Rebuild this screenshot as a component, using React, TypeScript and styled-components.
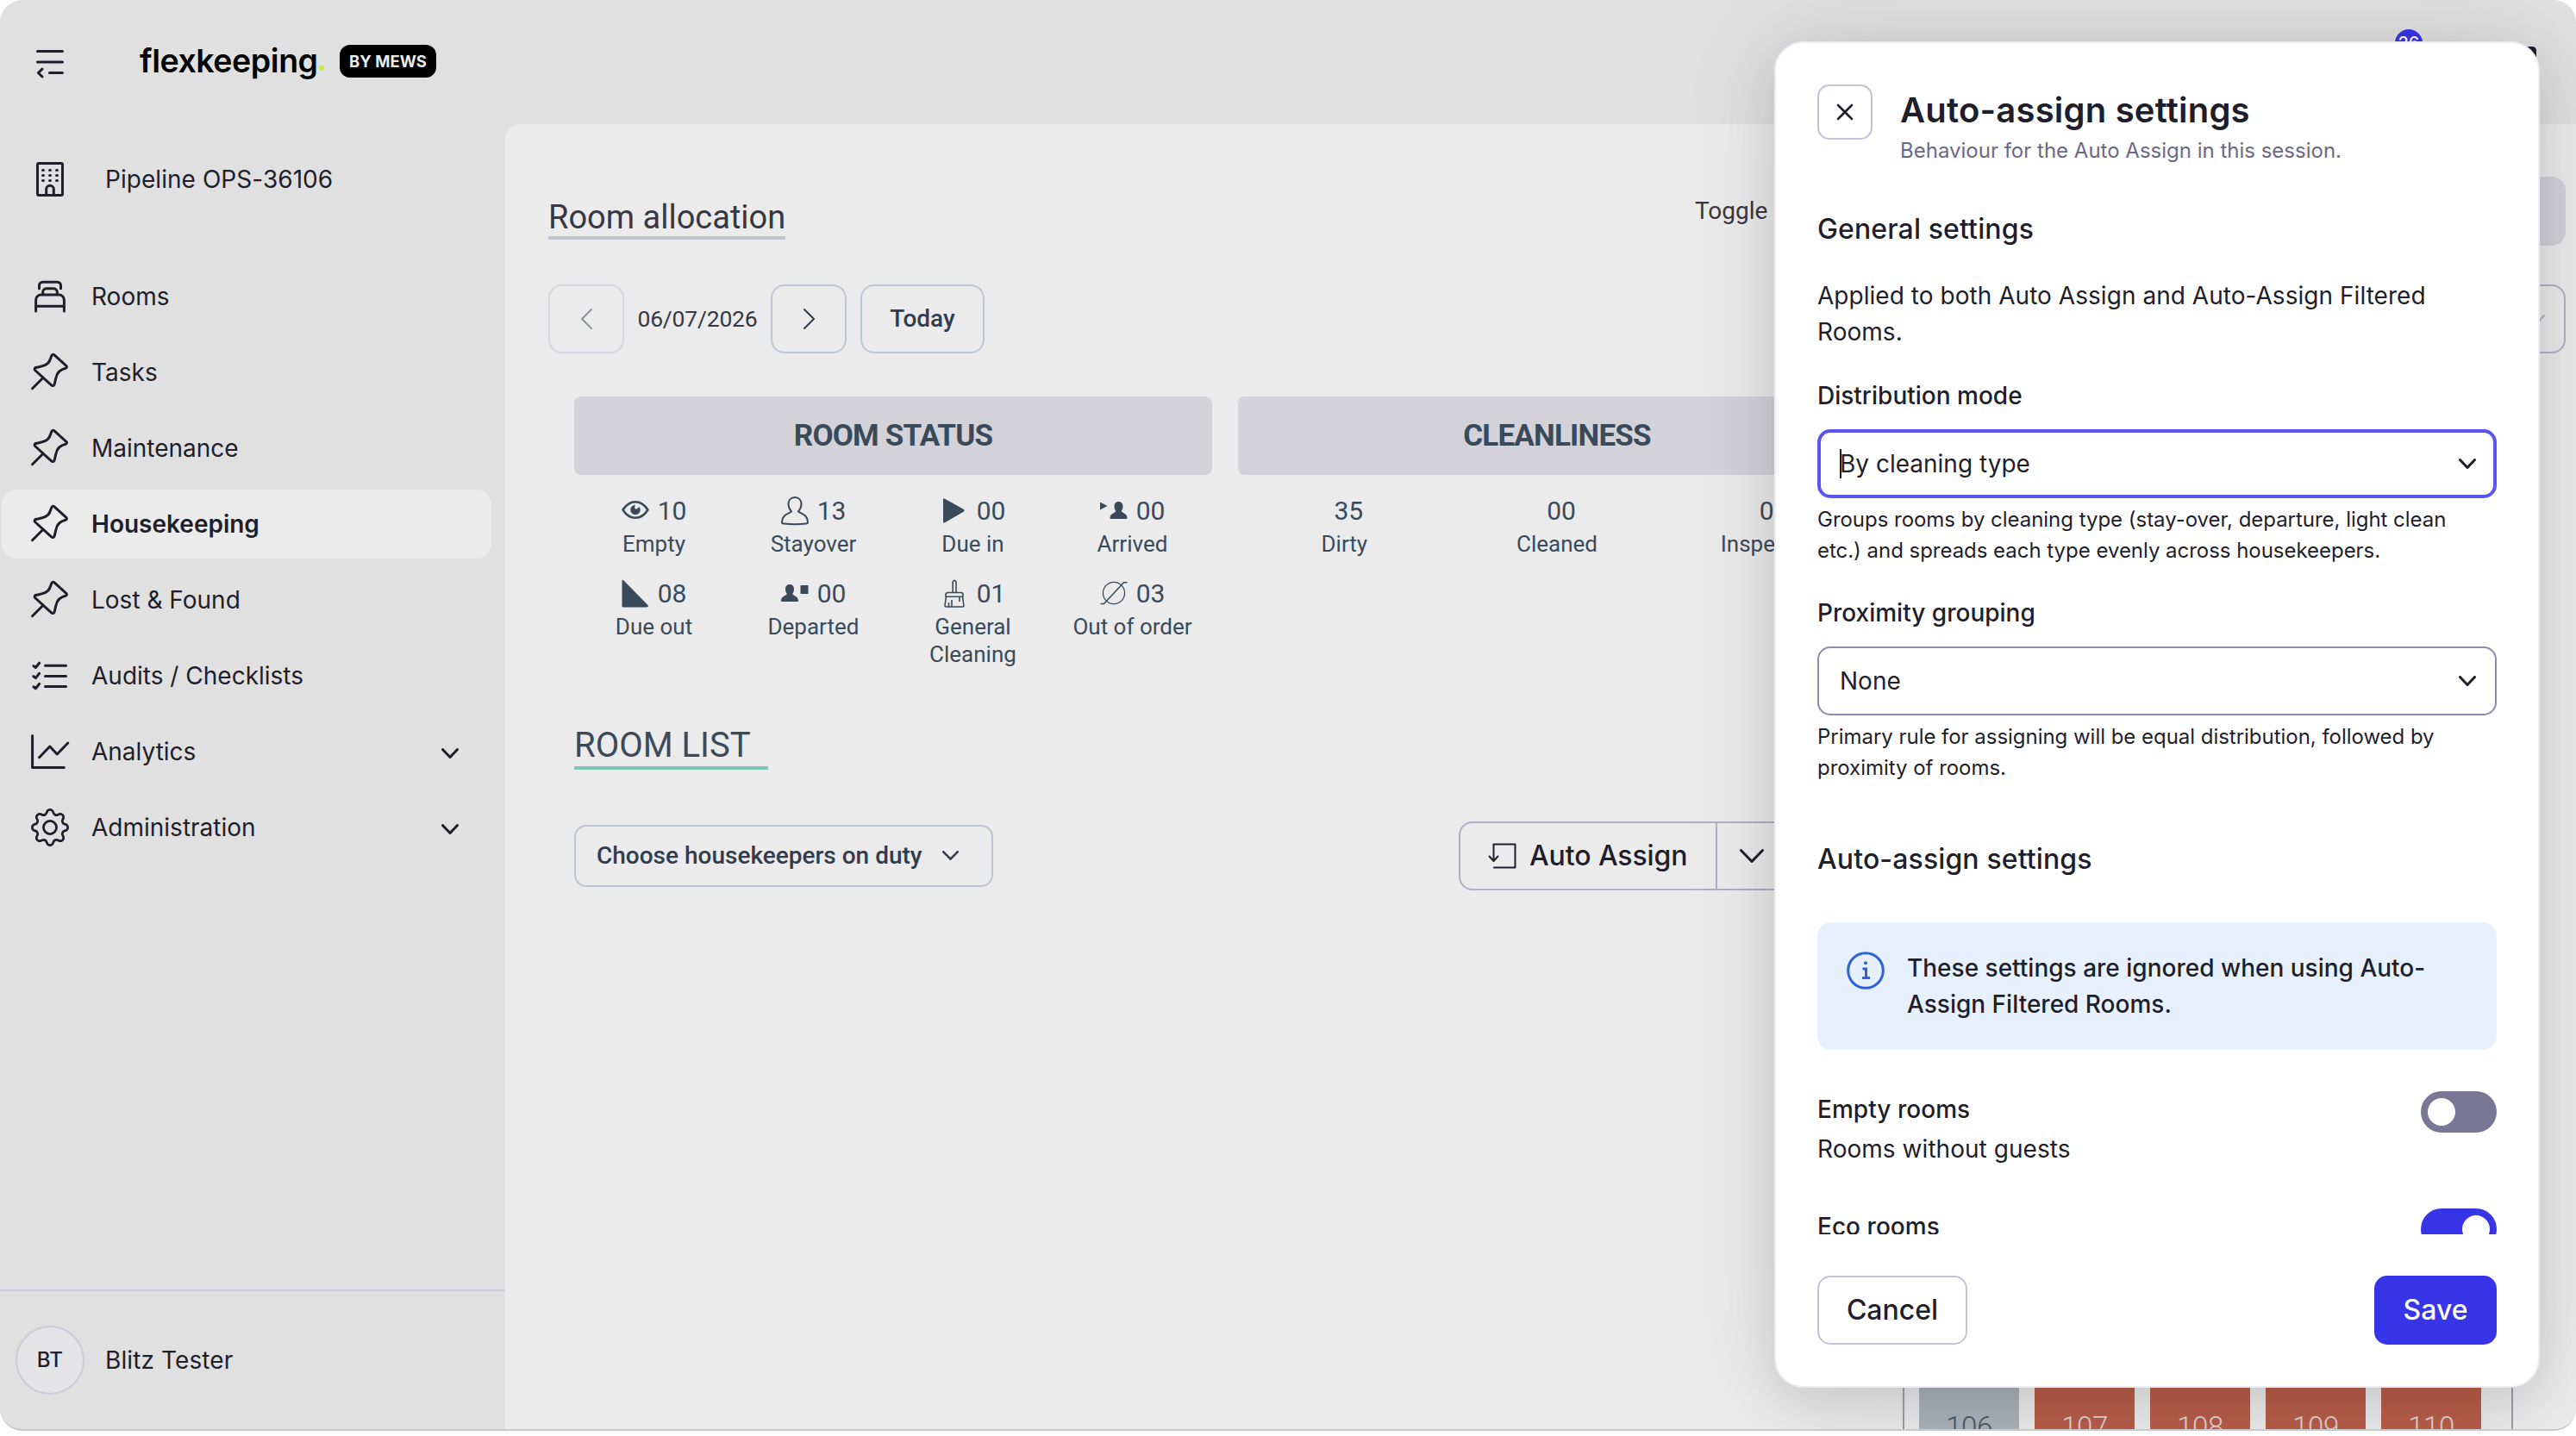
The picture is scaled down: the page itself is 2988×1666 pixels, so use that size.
import React from 'react'
import styled, { createGlobalStyle, css } from 'styled-components'
import { BsGear } from 'react-icons/bs'

const color = {
  sidebar: '#e0e0e0',
  surface: '#ebebeb',
  ink: '#1f1e2b',
  slate: '#3a4a5a',
  navy: '#333b4f',
  charcoal: '#383742',
  outline: '#bfc4d1',
  lavender: '#b1afc4',
  divider: '#cdcbd8',
  header: '#d3d2d8',
  primary: '#3834e8',
}

const inter = `Inter, 'Open Sans', sans-serif`
const roboto = `Roboto, 'Noto Sans', sans-serif`

const GlobalStyle = createGlobalStyle`
  * {
    box-sizing: border-box;
  }

  html,
  body {
    margin: 0;
    padding: 0;
    background: #fff;
  }

  body {
    width: 2988px;
    height: 1666px;
    overflow: hidden;
    font-family: ${inter};
    color: ${color.ink};
  }

  button {
    font: inherit;
    color: inherit;
    background: none;
    border: none;
    padding: 0;
  }

  h1, h2, h3, p {
    margin: 0;
    font-weight: 400;
  }

  svg {
    display: block;
    flex: none;
  }
`

const Window = styled.div`
  position: relative;
  width: 2988px;
  height: 1660px;
  display: flex;
  flex-direction: column;
  background: ${color.sidebar};
  border-bottom: 2px solid #c9c9c9;
  border-radius: 26px;
  overflow: hidden;
`

/* top bar */

const TopBar = styled.header`
  flex: none;
  height: 144px;
  display: flex;
  align-items: flex-start;
  padding: 34px 46px 0 36px;
`

const MenuButton = styled.button`
  margin-top: 18px;
`

const Brand = styled.div`
  display: flex;
  align-items: center;
  margin: 18px 0 0 82px;
  height: 38px;
  color: #000;
`

const BrandName = styled.span`
  width: 208px;
  font-size: 37.5px;
  font-weight: 600;
  line-height: 38px;
  letter-spacing: -0.45px;
  white-space: nowrap;
`

const BrandDot = styled.span`
  width: 6px;
  height: 6px;
  margin: 16px 18px 0 0;
  border-radius: 50%;
  background: #cfe83c;
`

const BrandTag = styled.span`
  width: 112px;
  height: 38px;
  border-radius: 12px;
  background: #000;
  color: ${color.surface};
  font-size: 18.5px;
  font-weight: 700;
  line-height: 38px;
  text-align: center;
  white-space: nowrap;
`

const TopActions = styled.div`
  display: flex;
  align-items: flex-start;
  gap: 92px;
  margin-left: auto;
`

const CountBadge = styled.span`
  width: 32px;
  height: 32px;
  border-radius: 50%;
  background: ${color.primary};
  color: #fff;
  font-size: 20px;
  font-weight: 500;
  line-height: 33px;
  text-align: center;
`

const ProfileButton = styled.button`
  margin-top: 20px;
`

/* sidebar */

const Body = styled.div`
  flex: 1;
  min-height: 0;
  display: flex;
`

const Sidebar = styled.aside`
  flex: none;
  width: 586px;
  display: flex;
  flex-direction: column;
`

const Property = styled.div`
  height: 80px;
  margin: 24px 0 56px;
  padding-left: 36px;
  display: flex;
  align-items: center;
  gap: 42px;
  font-size: 28px;
  letter-spacing: 0.05px;
`

const Nav = styled.nav`
  display: flex;
  flex-direction: column;
  gap: 8px;
  padding: 0 16px 0 2px;
`

const NavItem = styled.a<{ $active?: boolean }>`
  height: 80px;
  display: flex;
  align-items: center;
  gap: 26px;
  padding: 0 38px 0 34px;
  border-radius: 18px;
  font-size: 28px;
  white-space: nowrap;

  ${({ $active }) =>
    $active &&
    css`
      background: ${color.surface};
      font-weight: 600;
    `}

  & > svg:last-child:not(:first-child) {
    margin: 3px 0 0 auto;
  }
`

const UserRow = styled.div`
  height: 162px;
  margin-top: auto;
  padding-left: 18px;
  display: flex;
  align-items: center;
  gap: 24px;
  border-top: 2px solid ${color.divider};
  font-size: 28px;
  letter-spacing: 0.1px;
`

const Avatar = styled.span`
  width: 80px;
  height: 80px;
  border: 2px solid ${color.divider};
  border-radius: 50%;
  background: #e4e4e7;
  font-size: 24px;
  font-weight: 500;
  line-height: 76px;
  text-align: center;
`

/* main */

const Main = styled.main`
  flex: 1;
  min-width: 0;
  padding: 61px 12px 0 50px;
  background: ${color.surface};
  border-top-left-radius: 18px;
  font-family: ${roboto};
  color: ${color.charcoal};
`

const TitleRow = styled.div`
  height: 80px;
  display: flex;
  align-items: flex-start;
`

const PageTitle = styled.h1`
  width: 275px;
  margin-top: 25px;
  border-bottom: 4px solid ${color.outline};
  font-size: 38px;
  line-height: 44px;
  white-space: nowrap;
`

const ToggleLabel = styled.span`
  width: 110px;
  margin-left: 1055px;
  font-size: 28px;
  line-height: 80px;
`

const ToggleField = styled.div`
  flex: 1;
  height: 80px;
  border-radius: 16px;
  background: ${color.header};
`

const DateRow = styled.div`
  height: 80px;
  margin-top: 45px;
  display: flex;
  align-items: center;
`

const OutlineButton = styled.button<{ $faded?: boolean }>`
  width: 88px;
  height: 80px;
  display: flex;
  align-items: center;
  justify-content: center;
  border: 2px solid ${color.outline};
  border-radius: 16px;
  color: ${color.navy};
  opacity: ${({ $faded }) => ($faded ? 0.5 : 1)};
`

const TodayButton = styled(OutlineButton)`
  width: 144px;
  margin-left: 16px;
  padding-bottom: 1px;
  font-size: 28px;
  font-weight: 500;
`

const DateText = styled.span`
  width: 170px;
  padding-bottom: 2px;
  font-size: 26.5px;
  letter-spacing: -0.2px;
  text-align: center;
`

const FilterSelect = styled.div`
  width: 500px;
  height: 80px;
  margin-left: auto;
  padding-right: 22px;
  display: flex;
  align-items: center;
  justify-content: flex-end;
  border: 2px solid ${color.lavender};
  border-radius: 16px;
  color: #b9b9bd;
`

const StatGroups = styled.section`
  display: flex;
  gap: 30px;
  margin: 50px 0 0 30px;
  color: ${color.slate};
`

const StatGroup = styled.div`
  width: 740px;
`

const StatHeader = styled.h2`
  height: 91px;
  border-radius: 8px;
  background: ${color.header};
  font-size: 35px;
  font-weight: 700;
  line-height: 91px;
  letter-spacing: -0.8px;
  text-align: center;
`

const StatGrid = styled.div<{ $columns: number }>`
  display: grid;
  grid-template-columns: repeat(${({ $columns }) => $columns}, 1fr);
  row-gap: 22px;
  padding-top: 22px;
`

const Stat = styled.div`
  display: flex;
  flex-direction: column;
  align-items: center;
`

const StatValue = styled.div`
  height: 40px;
  margin-bottom: 2px;
  display: flex;
  align-items: center;
  gap: 10px;
  font-size: 30px;
  line-height: 40px;
`

const BareValue = styled(StatValue)`
  padding-left: 10px;
`

const StatLabel = styled.div`
  max-width: 150px;
  font-size: 26px;
  line-height: 32px;
  text-align: center;
`

const ListTitle = styled.h2`
  width: 225px;
  margin: 64px 0 60px 30px;
  padding-top: 2px;
  border-bottom: 4px solid #82c4ba;
  color: ${color.slate};
  font-size: 40px;
  line-height: 48px;
`

const ActionRow = styled.div`
  height: 80px;
  margin-left: 30px;
  display: flex;
  align-items: center;
`

const DutyButton = styled.button`
  width: 486px;
  height: 72px;
  display: flex;
  align-items: center;
  gap: 23px;
  padding: 0 0 1px 24px;
  border: 2px solid ${color.outline};
  border-radius: 14px;
  color: ${color.navy};
  font-size: 28px;
  font-weight: 500;
  white-space: nowrap;
`

const SplitButton = styled.div`
  height: 80px;
  margin-left: 540px;
  display: flex;
  border: 2px solid ${color.lavender};
  border-radius: 16px;
  color: ${color.ink};
  font-family: ${inter};
`

const SplitMain = styled.button`
  width: 298px;
  display: flex;
  align-items: center;
  gap: 15px;
  padding: 0 0 1px 32px;
  border-right: 2px solid ${color.lavender};
  font-size: 32px;
  font-weight: 500;
  letter-spacing: -0.1px;
  white-space: nowrap;
`

const SplitCaret = styled.button`
  width: 80px;
  display: flex;
  align-items: center;
  justify-content: center;
`

const FloorPlan = styled.div`
  width: 708px;
  height: 200px;
  margin: 507px 0 0 1571px;
  display: flex;
  gap: 18px;
  padding-left: 17px;
  border: solid #9aa0a8;
  border-width: 0 2px;
`

const RoomTile = styled.div<{ $dirty?: boolean }>`
  flex: none;
  width: 116px;
  padding-top: 91px;
  background: ${({ $dirty }) => ($dirty ? '#b85d49' : '#a9b2b9')};
  color: ${({ $dirty }) => ($dirty ? '#dfd3d0' : '#4a5966')};
  font-size: 33px;
  font-weight: 300;
  line-height: 50px;
  letter-spacing: -0.5px;
  text-align: center;
`

/* dialog */

const Dialog = styled.section`
  position: absolute;
  top: 48px;
  right: 42px;
  width: 888px;
  height: 1562px;
  display: flex;
  flex-direction: column;
  padding: 48px;
  border: 2px solid #edecf3;
  border-radius: 34px;
  background: #fff;
  box-shadow:
    0 0 120px rgba(20, 20, 40, 0.09),
    0 18px 60px rgba(0, 0, 0, 0.11);
`

const DialogHeader = styled.header`
  flex: none;
  display: flex;
  gap: 32px;
`

const CloseButton = styled.button`
  width: 64px;
  height: 64px;
  display: flex;
  align-items: center;
  justify-content: center;
  border: 2px solid #c4c2d6;
  border-radius: 14px;
`

const DialogTitle = styled.h2`
  font-size: 40px;
  font-weight: 600;
  line-height: 59px;
  letter-spacing: 0.2px;
`

const DialogSubtitle = styled.p`
  color: #6b6885;
  font-size: 24px;
  line-height: 36px;
`

const DialogBody = styled.div`
  flex: 1;
  min-height: 0;
  overflow: hidden;
`

const SectionTitle = styled.h3<{ $top: number }>`
  margin-top: ${({ $top }) => $top}px;
  font-size: 32px;
  font-weight: 500;
  line-height: 48px;
  letter-spacing: 0.12px;
`

const Paragraph = styled.p`
  font-size: 28px;
  line-height: 42px;
  letter-spacing: 0.04px;
`

const Intro = styled(Paragraph)`
  margin-top: 32px;
`

const FieldLabel = styled.label<{ $top: number }>`
  display: block;
  margin-top: ${({ $top }) => $top}px;
  font-size: 28px;
  font-weight: 500;
  line-height: 42px;
`

const Select = styled.div<{ $focused?: boolean }>`
  height: 80px;
  margin-top: 18px;
  display: flex;
  align-items: center;
  justify-content: space-between;
  border-radius: 15px;
  font-size: 28px;

  ${({ $focused }) =>
    $focused
      ? css`
          border: 4px solid #5a55f0;
          padding: 0 20px 0 22px;
        `
      : css`
          border: 2px solid #8e8aab;
          padding: 0 22px 0 24px;
        `}
`

const Caret = styled.span`
  display: inline-block;
  width: 2px;
  height: 34px;
  margin-right: -2px;
  background: ${color.ink};
  vertical-align: -7px;
`

const Hint = styled.p`
  margin-top: 7px;
  padding-right: 24px;
  font-size: 24px;
  line-height: 36px;
  letter-spacing: -0.03px;
`

const Notice = styled.div`
  height: 148px;
  margin-top: 49px;
  display: flex;
  gap: 26px;
  padding: 32px 34px;
  border-radius: 16px;
  background: #e7f1fe;
  font-size: 28px;
  font-weight: 500;
  line-height: 42px;

  svg {
    margin-top: 2px;
  }
`

const Setting = styled.div`
  height: 136px;
  display: flex;
  justify-content: space-between;
`

const SettingName = styled(Paragraph)`
  font-weight: 500;
  margin-bottom: 4px;
`

const Switch = styled.span<{ $on?: boolean }>`
  width: 88px;
  height: 48px;
  display: flex;
  justify-content: ${({ $on }) => ($on ? 'flex-end' : 'flex-start')};
  padding: 8px;
  border-radius: 24px;
  background: ${({ $on }) => ($on ? color.primary : '#797795')};

  &::after {
    content: '';
    width: 32px;
    height: 32px;
    border-radius: 50%;
    background: #fff;
  }
`

const SettingList = styled.div`
  margin-top: 48px;
`

const DialogFooter = styled.footer`
  flex: none;
  display: flex;
  justify-content: space-between;
  padding-top: 48px;
`

const FooterButton = styled.button<{ $primary?: boolean }>`
  width: ${({ $primary }) => ($primary ? 142 : 174)}px;
  height: 80px;
  padding-bottom: 2px;
  border: 2px solid ${({ $primary }) => ($primary ? color.primary : '#c4c2d6')};
  border-radius: 15px;
  background: ${({ $primary }) => ($primary ? color.primary : '#fff')};
  color: ${({ $primary }) => ($primary ? '#fff' : color.ink)};
  font-size: 32px;
  font-weight: 500;
`

/* icons */

const LineIcon = ({ children }: { children: React.ReactNode }) => (
  <svg
    width="44"
    height="44"
    viewBox="0 0 44 44"
    fill="none"
    stroke="currentColor"
    strokeWidth="3"
    strokeLinecap="round"
    strokeLinejoin="round"
    overflow="visible"
  >
    {children}
  </svg>
)

const MenuIcon = () => (
  <LineIcon>
    <path d="M7.5 7.5h29M7.5 20h29M21.5 32.5h15M13 28.2l-4.6 4.3L13 37" />
  </LineIcon>
)

const BuildingIcon = () => (
  <LineIcon>
    <rect x="7.5" y="3.5" width="29" height="37" rx="1.5" />
    <path d="M17.7 40v-6.5a4.3 4.3 0 0 1 8.6 0V40" />
    <path d="M13.6 11.5h.8M21.6 11.5h.8M29.6 11.5h.8M13.6 17.5h.8M21.6 17.5h.8M29.6 17.5h.8M13.6 23.5h.8M21.6 23.5h.8M29.6 23.5h.8" />
  </LineIcon>
)

const BedIcon = () => (
  <LineIcon>
    <path d="M9.5 12.8V9.2a4 4 0 0 1 4-4h17a4 4 0 0 1 4 4v3.6" />
    <path d="M13.7 19v-2.2a4 4 0 0 1 4-4h8.6a4 4 0 0 1 4 4V19" />
    <path d="M5.6 39V26a6 6 0 0 1 6-6h20.8a6 6 0 0 1 6 6v13M5.6 33.2h32.8" />
  </LineIcon>
)

const PinIcon = () => (
  <LineIcon>
    <path d="M23.8 2.7Q25.3 .2 27.3 2.2L40.8 14.4Q42.3 16 40.2 17.2C34.5 18.5 30 22.5 29 28L27.2 35.6Q26 38.8 23.6 36.8L4.6 19.5Q3.2 17.2 5.6 16.5C12 15 20 14.5 22.3 6.8Z" />
    <path d="M14 28.2L1.5 40.7" />
  </LineIcon>
)

const ChecklistIcon = () => (
  <LineIcon>
    {[0, 12.1, 24.2].map((y) => (
      <path key={y} d={`M16.5 ${10.3 + y}H40.5M2.9 ${10.6 + y}l2.5 1.9l4.2-5.3`} />
    ))}
  </LineIcon>
)

const ChartIcon = () => (
  <LineIcon>
    <path d="M1.6 3.5V40.5H38.3M9.5 28.7L21.8 16L30.2 25L42.8 12" />
  </LineIcon>
)

type ChevronProps = {
  width?: number
  height?: number
  stroke?: number
  dir?: 'down' | 'left' | 'right'
}

const Chevron = ({ width = 20, height = 12, stroke = 3, dir = 'down' }: ChevronProps) => {
  const o = stroke / 2
  const points = {
    down: `${o},${o} ${width / 2},${height - o} ${width - o},${o}`,
    left: `${width - o},${o} ${o},${height / 2} ${width - o},${height - o}`,
    right: `${o},${o} ${width - o},${height / 2} ${o},${height - o}`,
  }[dir]
  return (
    <svg width={width} height={height} fill="none" stroke="currentColor" strokeWidth={stroke} strokeLinecap="round" strokeLinejoin="round">
      <polyline points={points} />
    </svg>
  )
}

const CloseIcon = () => (
  <svg width="20" height="20" fill="none" stroke="currentColor" strokeWidth="2.6" strokeLinecap="round">
    <path d="M2 2l16 16M18 2L2 18" />
  </svg>
)

const InfoIcon = () => (
  <svg width="44" height="44" fill="none" stroke="#2f62d9" strokeWidth="3">
    <circle cx="22" cy="22" r="20.3" />
    <path d="M18.5 20h4v10.5M18 30.5h9" />
    <circle cx="22" cy="13.3" r="2" fill="#2f62d9" stroke="none" />
  </svg>
)

const AssignIcon = () => (
  <svg width="33" height="30" fill="none" stroke="currentColor" strokeWidth="2" strokeLinejoin="round" strokeLinecap="round">
    <path d="M6.5 20.5V1.5H31.5V28.5H7M1.5 15.5l5 5.5l5-5.5" />
  </svg>
)

const ProfileIcon = () => (
  <svg width="40" height="40" fill="none" stroke="currentColor" strokeWidth="5">
    <rect x="2.5" y="2.5" width="35" height="35" rx="2" />
  </svg>
)

const StatIcon = ({ children }: { children: React.ReactNode }) => (
  <svg width="32" height="34" viewBox="0 0 32 34" fill="currentColor" stroke="currentColor" strokeWidth="0">
    {children}
  </svg>
)

const personPath =
  'M10 0C13.5 0 15 2.5 15 5.5C15 8 14.2 9.5 13.2 11C14 13 19.5 13.5 20 18.5Q20 20 18.5 20H1.5Q0 20 0 18.5C.5 13.5 6 13 6.8 11C5.8 9.5 5 8 5 5.5C5 2.5 6.5 0 10 0Z'

const statIcons = {
  eye: (
    <StatIcon>
      <path d="M1.5 15.5C6 8.5 11 6.2 16 6.2S26 8.5 30.5 15.5C26 22.5 21 24.8 16 24.8S6 22.5 1.5 15.5Z" fill="none" strokeWidth="2.6" strokeLinejoin="round" />
      <path d="M16 9.8a5.7 5.7 0 1 0 5.7 5.7a5.7 5.7 0 0 0-1.2-3.5l-2.8 2.4a2 2 0 0 1-2.5-2.5Z" />
    </StatIcon>
  ),
  person: (
    <StatIcon>
      <path d="M16 1C21 1 23.5 4.5 23.5 9C23.5 13 22 15 20 17.3C22 20 30.5 20 31 29.5Q31 31.5 29 31.5Q16 33 3 31.5Q1 31.5 1 29.5C1.5 20 10 20 12 17.3C10 15 8.5 13 8.5 9C8.5 4.5 11 1 16 1Z" fill="none" strokeWidth="2" />
    </StatIcon>
  ),
  play: (
    <StatIcon>
      <path d="M3 3.5Q3 1.5 5 2.8L27 15Q28.5 16.2 27 17.4L5 30.2Q3 31.2 3 29.2Z" />
    </StatIcon>
  ),
  arrived: (
    <StatIcon>
      <path d="M0 6.5L8.5 11L0 15.5Z" />
      <path d={personPath} transform="translate(11.5 6)" />
    </StatIcon>
  ),
  wedge: (
    <StatIcon>
      <path d="M.5 2Q1 0 2.5 1.5L30.5 30Q31.5 32.5 29 32.5H2Q.5 32.5 .5 31Z" />
    </StatIcon>
  ),
  departed: (
    <StatIcon>
      <path d={personPath} transform="translate(0 6)" />
      <rect x="22.5" y="7" width="9" height="10" />
    </StatIcon>
  ),
  broom: (
    <StatIcon>
      <path
        d="M14.2 15.5V3Q16 -.5 18 3V15.5M8.5 15.5H23.5Q26 15.5 26 18V20.3H6V18Q6 15.5 8.5 15.5ZM6.5 20.3L5 30.5Q5 32 6.5 32H25.5Q27 32 27 30.5L25.5 20.3M9.5 32V27M13 32V24M22 26V20.5"
        fill="none"
        strokeWidth="1.6"
      />
    </StatIcon>
  ),
  outOfOrder: (
    <StatIcon>
      <circle cx="16" cy="16" r="12.6" fill="none" strokeWidth="1.3" />
      <path d="M.5 28.5H4.5L27.5 3.8H31.5" fill="none" strokeWidth="1.5" />
    </StatIcon>
  ),
}

type StatData = {
  label: string
  value: string
  icon?: keyof typeof statIcons
}

const roomStatus: StatData[] = [
  { label: 'Empty', value: '10', icon: 'eye' },
  { label: 'Stayover', value: '13', icon: 'person' },
  { label: 'Due in', value: '00', icon: 'play' },
  { label: 'Arrived', value: '00', icon: 'arrived' },
  { label: 'Due out', value: '08', icon: 'wedge' },
  { label: 'Departed', value: '00', icon: 'departed' },
  { label: 'General Cleaning', value: '01', icon: 'broom' },
  { label: 'Out of order', value: '03', icon: 'outOfOrder' },
]

const cleanliness: StatData[] = [
  { label: 'Dirty', value: '35' },
  { label: 'Cleaned', value: '00' },
  { label: 'Inspected', value: '00' },
]

const navItems = [
  { label: 'Rooms', icon: <BedIcon /> },
  { label: 'Tasks', icon: <PinIcon /> },
  { label: 'Maintenance', icon: <PinIcon /> },
  { label: 'Housekeeping', icon: <PinIcon />, active: true },
  { label: 'Lost & Found', icon: <PinIcon /> },
  { label: 'Audits / Checklists', icon: <ChecklistIcon /> },
  { label: 'Analytics', icon: <ChartIcon />, nested: true },
  { label: 'Administration', icon: <BsGear size={44} />, nested: true },
]

const rooms = ['106', '107', '108', '109', '110']

const StatsPanel = ({ title, columns, stats }: { title: string; columns: number; stats: StatData[] }) => (
  <StatGroup>
    <StatHeader>{title}</StatHeader>
    <StatGrid $columns={columns}>
      {stats.map(({ label, value, icon }) => (
        <Stat key={label}>
          {icon ? (
            <StatValue>
              {statIcons[icon]}
              {value}
            </StatValue>
          ) : (
            <BareValue>{value}</BareValue>
          )}
          <StatLabel>{label}</StatLabel>
        </Stat>
      ))}
    </StatGrid>
  </StatGroup>
)

const SettingsDialog = () => (
  <Dialog>
    <DialogHeader>
      <CloseButton aria-label="Close">
        <CloseIcon />
      </CloseButton>
      <div>
        <DialogTitle>Auto-assign settings</DialogTitle>
        <DialogSubtitle>Behaviour for the Auto Assign in this session.</DialogSubtitle>
      </div>
    </DialogHeader>
    <DialogBody>
      <SectionTitle $top={49}>General settings</SectionTitle>
      <Intro>Applied to both Auto Assign and Auto-Assign Filtered Rooms.</Intro>
      <FieldLabel $top={32}>Distribution mode</FieldLabel>
      <Select $focused>
        <span>
          <Caret />
          By cleaning type
        </span>
        <Chevron />
      </Select>
      <Hint>Groups rooms by cleaning type (stay-over, departure, light clean etc.) and spreads each type evenly across housekeepers.</Hint>
      <FieldLabel $top={33}>Proximity grouping</FieldLabel>
      <Select>
        <span>None</span>
        <Chevron />
      </Select>
      <Hint>Primary rule for assigning will be equal distribution, followed by proximity of rooms.</Hint>
      <SectionTitle $top={64}>Auto-assign settings</SectionTitle>
      <Notice>
        <InfoIcon />
        <span>These settings are ignored when using Auto-Assign Filtered Rooms.</span>
      </Notice>
      <SettingList>
        <Setting>
          <div>
            <SettingName>Empty rooms</SettingName>
            <Paragraph>Rooms without guests</Paragraph>
          </div>
          <Switch />
        </Setting>
        <Setting>
          <div>
            <SettingName>Eco rooms</SettingName>
          </div>
          <Switch $on />
        </Setting>
      </SettingList>
    </DialogBody>
    <DialogFooter>
      <FooterButton>Cancel</FooterButton>
      <FooterButton $primary>Save</FooterButton>
    </DialogFooter>
  </Dialog>
)

const App = () => (
  <>
    <GlobalStyle />
    <Window>
      <TopBar>
        <MenuButton aria-label="Collapse menu">
          <MenuIcon />
        </MenuButton>
        <Brand>
          <BrandName>flexkeeping</BrandName>
          <BrandDot />
          <BrandTag>BY MEWS</BrandTag>
        </Brand>
        <TopActions>
          <CountBadge>26</CountBadge>
          <ProfileButton aria-label="Profile">
            <ProfileIcon />
          </ProfileButton>
        </TopActions>
      </TopBar>
      <Body>
        <Sidebar>
          <Property>
            <BuildingIcon />
            Pipeline OPS-36106
          </Property>
          <Nav>
            {navItems.map(({ label, icon, active, nested }) => (
              <NavItem key={label} $active={active}>
                {icon}
                {label}
                {nested && <Chevron />}
              </NavItem>
            ))}
          </Nav>
          <UserRow>
            <Avatar>BT</Avatar>
            Blitz Tester
          </UserRow>
        </Sidebar>
        <Main>
          <TitleRow>
            <PageTitle>Room allocation</PageTitle>
            <ToggleLabel>Toggle</ToggleLabel>
            <ToggleField />
          </TitleRow>
          <DateRow>
            <OutlineButton $faded aria-label="Previous day">
              <Chevron dir="left" width={13} height={24} stroke={2} />
            </OutlineButton>
            <DateText>06/07/2026</DateText>
            <OutlineButton aria-label="Next day">
              <Chevron dir="right" width={13} height={24} stroke={2} />
            </OutlineButton>
            <TodayButton>Today</TodayButton>
            <FilterSelect>
              <Chevron width={18} height={11} stroke={2.5} />
            </FilterSelect>
          </DateRow>
          <StatGroups>
            <StatsPanel title="ROOM STATUS" columns={4} stats={roomStatus} />
            <StatsPanel title="CLEANLINESS" columns={3} stats={cleanliness} />
          </StatGroups>
          <ListTitle>ROOM LIST</ListTitle>
          <ActionRow>
            <DutyButton>
              Choose housekeepers on duty
              <Chevron width={19} height={11} stroke={2.6} />
            </DutyButton>
            <SplitButton>
              <SplitMain>
                <AssignIcon />
                Auto Assign
              </SplitMain>
              <SplitCaret aria-label="More assign options">
                <Chevron width={28} height={16} />
              </SplitCaret>
            </SplitButton>
          </ActionRow>
          <FloorPlan>
            {rooms.map((room, i) => (
              <RoomTile key={room} $dirty={i > 0}>
                {room}
              </RoomTile>
            ))}
          </FloorPlan>
        </Main>
      </Body>
      <SettingsDialog />
    </Window>
  </>
)

export default App
